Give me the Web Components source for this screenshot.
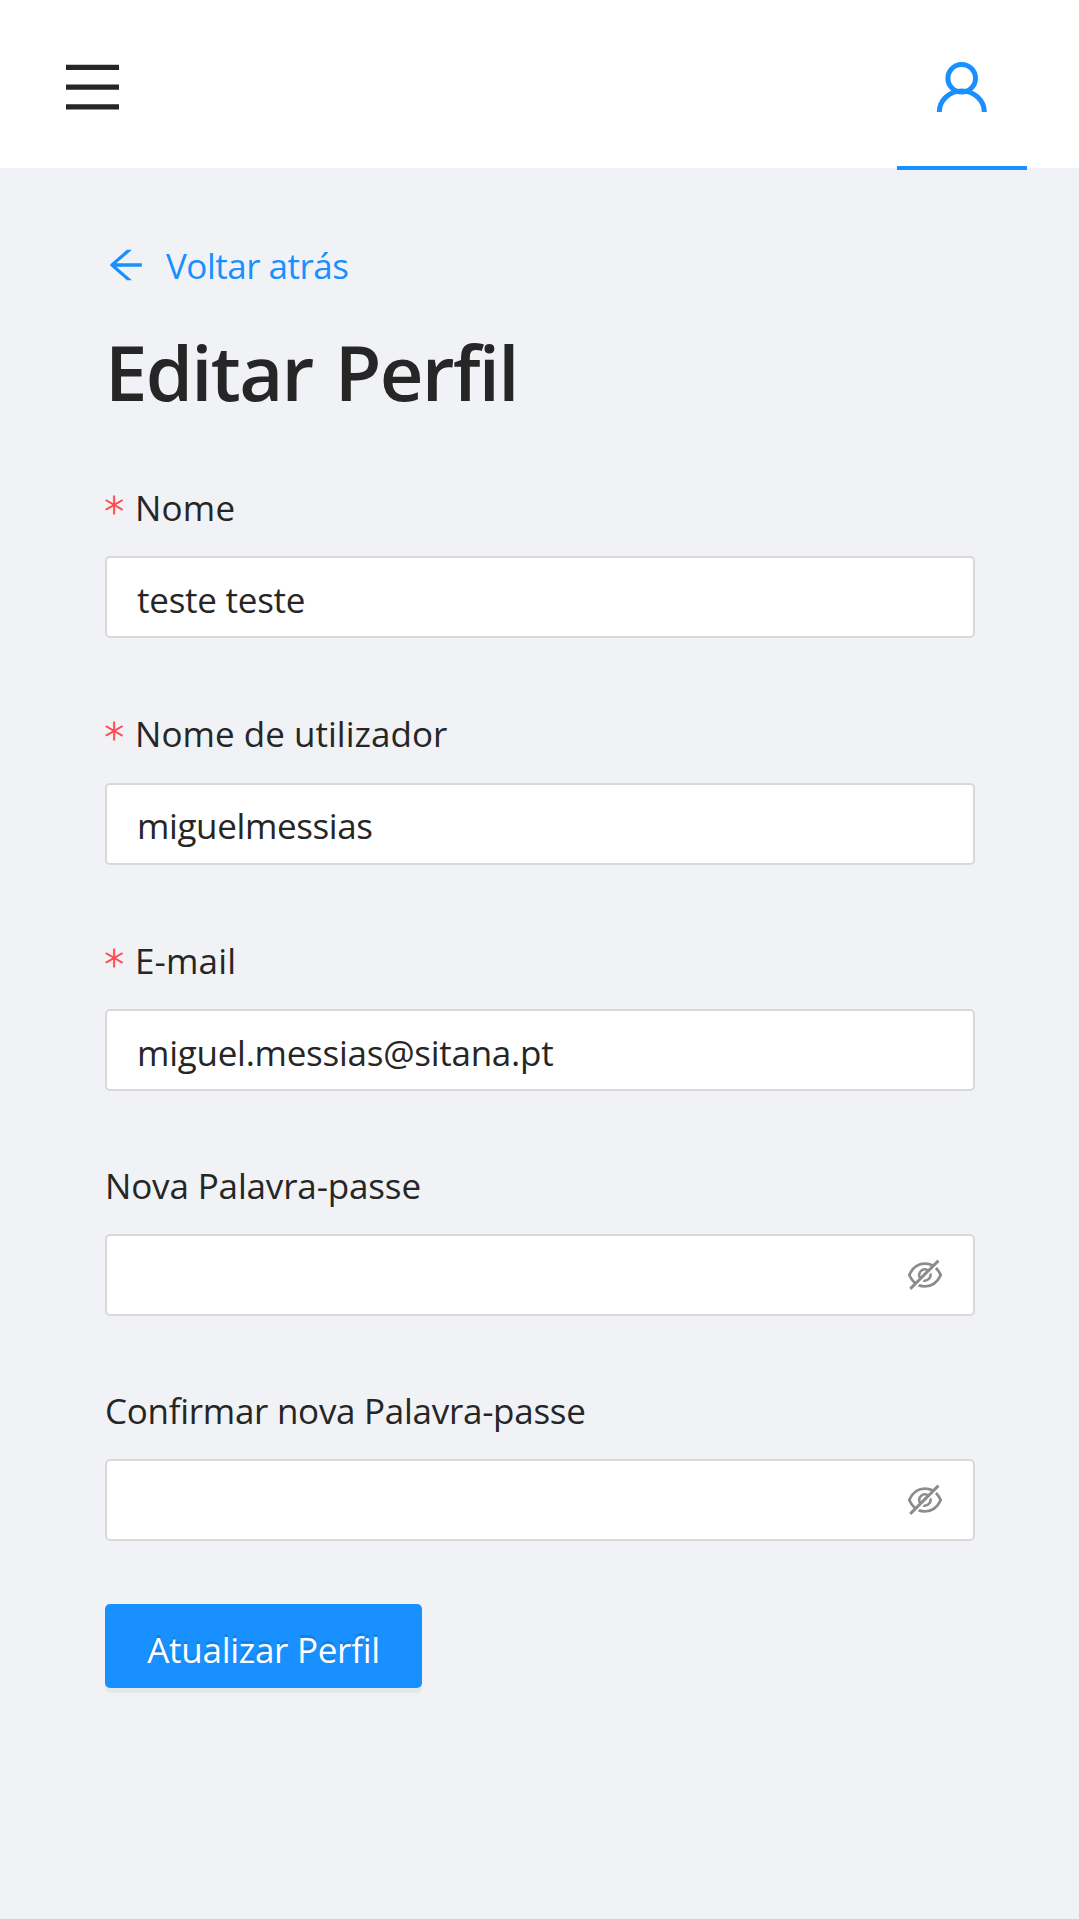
<!DOCTYPE html>
<html lang="pt">
<head>
<meta charset="utf-8">
<title>Editar Perfil</title>
<style>
html,body{margin:0;background:#f0f2f5}
body{font-family:"Open Sans","Noto Sans",sans-serif;font-size:35px;font-weight:370;color:#262626;min-height:1919px}
</style>
</head>
<body>
<profile-page></profile-page>
<script>
const define=(name,html)=>customElements.define(name,class extends HTMLElement{
  constructor(){super();this.attachShadow({mode:'open'}).innerHTML=html;}
});

define('user-icon',`<style>:host{display:block;width:68px;height:68px}svg{display:block;width:100%;height:100%}</style>
<svg viewBox="0 0 68 68" fill="none" stroke="currentColor" stroke-width="5"><circle cx="33.7" cy="24.2" r="13.8"/><path d="M11.3 58A22.5 21 0 0 1 56.3 58"/></svg>`);

define('arrow-left-icon',`<style>:host{display:block;width:44px;height:44px}svg{display:block;width:100%;height:100%}</style>
<svg viewBox="0 0 1024 1024" fill="currentColor"><path d="M872 474H286.9l350.2-304c5.6-4.9 2.2-14-5.2-14h-88.5c-3.9 0-7.6 1.4-10.5 3.9L155 487.8a31.96 31.96 0 000 48.3L535.1 866c1.5 1.3 3.3 2 5.2 2h91.5c7.4 0 10.8-9.2 5.2-14L286.9 550H872c4.4 0 8-3.6 8-8v-60c0-4.4-3.6-8-8-8z"/></svg>`);

define('eye-off-icon',`<style>:host{display:block;width:40px;height:40px;color:#8c8c8c}svg{display:block;width:100%;height:100%}</style>
<svg viewBox="0 0 1024 1024" fill="currentColor"><path d="M942.2 486.2Q889.47 375.11 816.7 305l-50.88 50.88C807.31 395.53 843.45 447.4 874.7 512 791.5 684.2 673.4 766 512 766q-72.67 0-133.87-22.38L323 798.75Q408 838 512 838q288.3 0 430.2-300.3a60.29 60.29 0 000-51.5zm-63.57-320.64L836 122.88a8 8 0 00-11.32 0L715.31 232.2Q624.86 186 512 186q-288.3 0-430.2 300.3a60.3 60.3 0 000 51.5q56.69 119.4 136.5 191.41L112.48 835a8 8 0 000 11.31L155.17 889a8 8 0 0011.31 0l712.15-712.12a8 8 0 000-11.32zM149.3 512C232.6 339.8 350.7 258 512 258c54.54 0 104.13 9.36 149.12 28.39l-70.3 70.3a176 176 0 00-238.13 238.13l-83.42 83.42C223.1 637.49 183.3 582.28 149.3 512zm246.7 0a112.11 112.11 0 01146.2-106.69L401.31 546.2A112 112 0 01396 512z"/><path d="M508 624c-3.46 0-6.87-.16-10.25-.47l-52.82 52.82a176.09 176.09 0 00227.42-227.42l-52.82 52.82c.31 3.38.47 6.79.47 10.25a111.94 111.94 0 01-112 112z"/></svg>`);

define('menu-toggle',`<style>:host{display:block;width:53px;height:46px}svg{display:block}</style><svg width="53" height="46" fill="#262626"><path d="M0 .7h53v5.2H0zM0 20.5h53v5.2H0zM0 40.3h53v5.2H0z"/></svg>`);

define('nav-tab',`<style>:host{display:flex;flex-direction:column;align-items:center;justify-content:space-between;width:130px;height:170px;color:#1890ff;box-sizing:border-box;padding-top:54px}
span{width:130px;height:4px;background:#1890ff}</style><slot></slot><span></span>`);

define('app-header',`<style>:host{display:flex;justify-content:space-between;align-items:flex-start;height:168px;background:#fff;padding:0 52px 0 66px}
menu-toggle{margin-top:64px}</style>
<menu-toggle></menu-toggle><nav-tab><user-icon></user-icon></nav-tab>`);

define('back-link',`<style>:host{display:flex;align-items:center;height:58px;line-height:58px;color:#1890ff;gap:18px}
arrow-left-icon{margin-left:-1px}
span{padding-top:2px;letter-spacing:-.5px;white-space:nowrap}</style><arrow-left-icon></arrow-left-icon><span><slot></slot></span>`);

define('page-title',`<style>:host{display:block}h1{margin:0;font-size:76px;line-height:96px;font-weight:600;letter-spacing:-1.7px;word-spacing:4px;white-space:nowrap}</style><h1><slot></slot></h1>`);

customElements.define('form-field',class extends HTMLElement{
  connectedCallback(){
    const a=n=>this.getAttribute(n);
    this.attachShadow({mode:'open'}).innerHTML=`<style>
:host{display:flex;flex-direction:column;gap:27.4px}
label{display:flex;height:42px;line-height:42px;white-space:nowrap;letter-spacing:${a('label-spacing')||0}px}
label b{font:200 39px/50px "DejaVu Sans",sans-serif;color:#ff4d4f;-webkit-text-stroke:.9px #ff4d4f;width:30.5px;margin-left:-.5px;letter-spacing:0}
.box{display:flex;align-items:center;justify-content:space-between;box-sizing:border-box;height:82px;border:2px solid #d9d9d9;border-radius:5px;background:#fff;padding:0 27.5px 0 30px}
.box span{padding-top:4px;white-space:nowrap;letter-spacing:${a('value-spacing')||0}px}
</style>
<label>${this.hasAttribute('required')?'<b>*</b>':''}<span>${a('label')}</span></label>
<div class="box"><span>${a('value')||''}</span>${this.hasAttribute('password')?'<eye-off-icon></eye-off-icon>':''}</div>`;
  }
});

define('primary-button',`<style>:host{display:block}
button{display:block;width:317px;height:84.5px;margin:0;border:0;border-radius:5px;background:#1890ff;color:#fff;font:inherit;line-height:84px;padding:4px 0 0;letter-spacing:-.27px;text-shadow:0 -2.6px 0 rgba(0,0,0,.12);box-shadow:0 5px 0 rgba(0,0,0,.043);box-sizing:border-box;white-space:nowrap}</style>
<button type="button"><slot></slot></button>`);

define('profile-page',`<style>
:host{display:block}
main{display:flex;flex-direction:column;padding:68px 104.5px 0 105px}
page-title{margin-top:30px}
form{display:flex;flex-direction:column;margin:67px 0 0}
form-field{margin-bottom:75.1px}
form-field.tight{margin-bottom:73.4px}
form-field.last{margin-bottom:62.6px}
</style>
<app-header></app-header>
<main>
<back-link>Voltar atrás</back-link>
<page-title>Editar Perfil</page-title>
<form>
<form-field required label="Nome" label-spacing=".2" value="teste teste" value-spacing="-.25"></form-field>
<form-field required label="Nome de utilizador" label-spacing=".03" value="miguelmessias" value-spacing="-.38"></form-field>
<form-field class="tight" required label="E-mail" label-spacing=".15" value="miguel.messias@sitana.pt" value-spacing="-.26"></form-field>
<form-field class="tight" password label="Nova Palavra-passe" label-spacing="-.15"></form-field>
<form-field class="last" password label="Confirmar nova Palavra-passe" label-spacing="-.28"></form-field>
<primary-button>Atualizar Perfil</primary-button>
</form>
</main>`);
</script>
</body>
</html>
